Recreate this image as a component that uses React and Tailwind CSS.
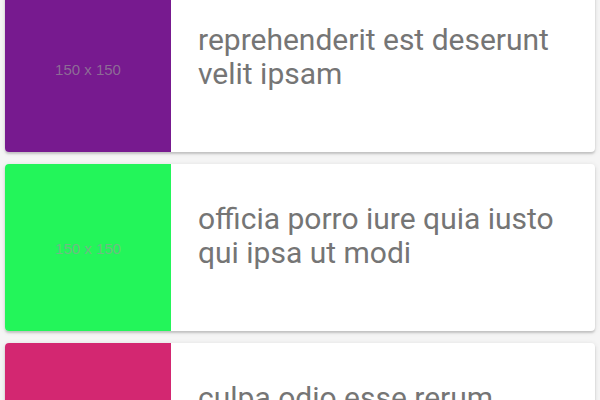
import React from "react";

const items = [
    { color: "bg-[#771a8f]", title: "reprehenderit est deserunt velit ipsam" },
    { color: "bg-[#23f55a]", title: "officia porro iure quia iusto qui ipsa ut modi" },
    { color: "bg-[#d32771]", title: "culpa odio esse rerum omnis laboriosam voluptate repudiandae" },
];

function Card({ color, title }) {
    return (
        <div className="flex h-[167px] overflow-hidden rounded bg-white shadow-[0_2px_2px_rgba(0,0,0,0.14),0_1px_5px_rgba(0,0,0,0.12)]">
            <div className={`${color} flex h-[167px] w-[166px] shrink-0 items-center justify-center pt-[3px]`}>
                <span className="font-['Liberation_Sans',Arial,sans-serif] text-[15px] text-[#9a9a9a]/65">
                    150 x 150
                </span>
            </div>
            <div className="flex-1 px-[27px] pt-[38px]">
                <div className="font-['Roboto',sans-serif] text-[30px] leading-[34px] text-[#757575]">
                    {title}
                </div>
            </div>
        </div>
    );
}

export default function App() {
    return (
        <div className="h-[400px] overflow-hidden bg-[#f5f5f5]">
            <div className="-mt-[15px] flex flex-col gap-3 px-[5px]">
                {items.map((it, i) => (
                    <Card key={i} {...it} />
                ))}
            </div>
        </div>
    );
}
